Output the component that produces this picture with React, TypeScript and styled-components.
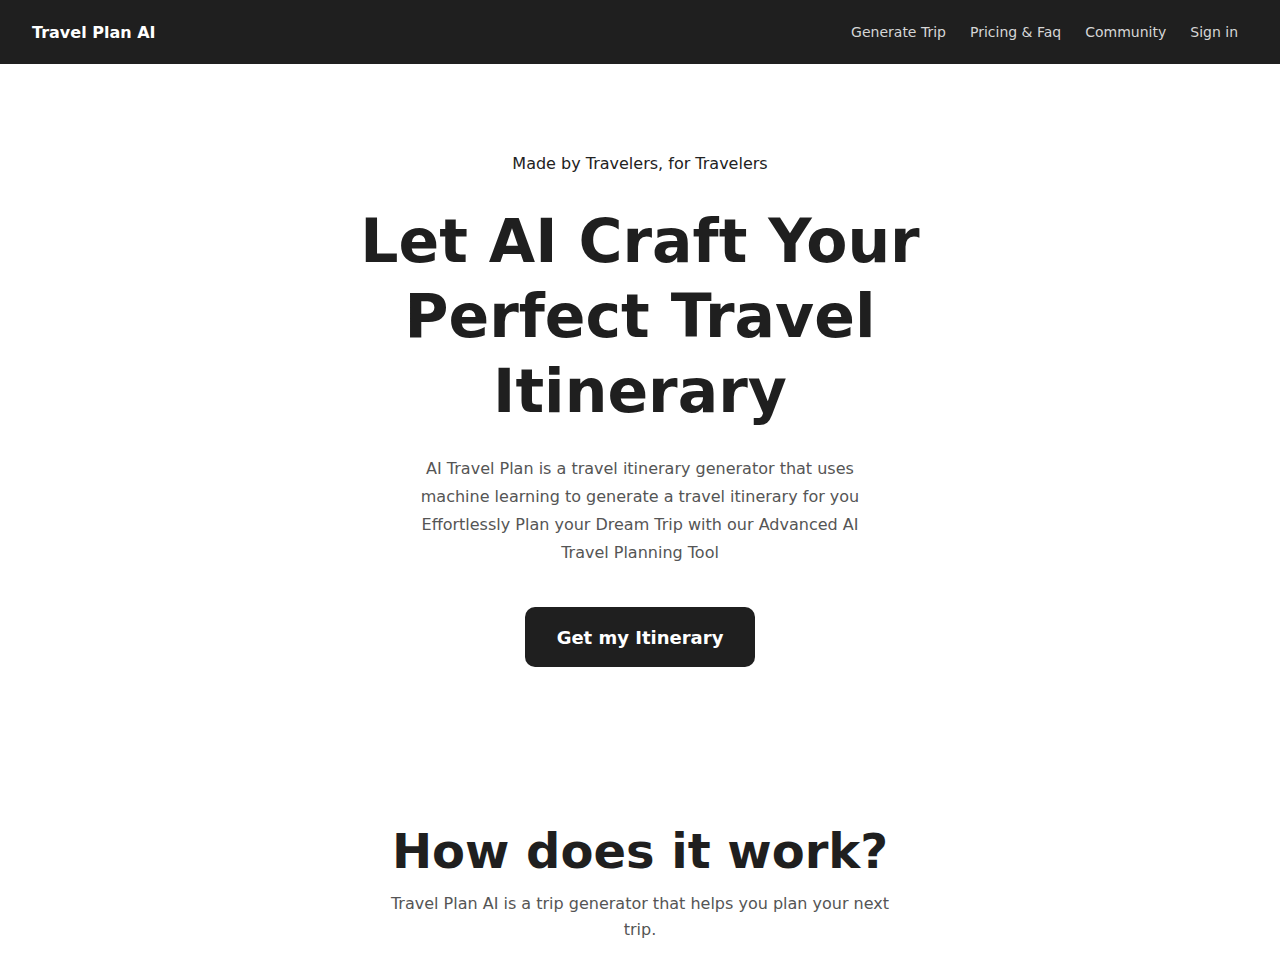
import React from 'react';
import styled, { createGlobalStyle } from 'styled-components';

const GlobalStyle = createGlobalStyle`
  html, body {
    margin: 0;
    padding: 0;
    background: #ffffff;
    font-family: "DejaVu Sans", "Noto Sans", sans-serif;
    color: #1f1f1f;
  }
  * { box-sizing: border-box; }
`;

const NavBar = styled.header`
  height: 64px;
  background: #1f1f1f;
  display: flex;
  align-items: center;
  justify-content: space-between;
  padding: 0 42px 0 32px;
`;

const Logo = styled.a`
  color: #ffffff;
  font-weight: 700;
  font-size: 16px;
  text-decoration: none;
`;

const NavLinks = styled.nav`
  display: flex;
  gap: 24px;
`;

const NavLink = styled.a`
  color: #d6d6d6;
  font-size: 14px;
  text-decoration: none;
`;

const Hero = styled.section`
  display: flex;
  flex-direction: column;
  align-items: center;
  text-align: center;
  padding-top: 90px;
`;

const Tagline = styled.p`
  margin: 0;
  font-size: 16px;
  line-height: 20px;
  color: #222;
`;

const Title = styled.h1`
  margin: 30px 0 0;
  max-width: 600px;
  font-size: 60px;
  line-height: 75px;
  font-weight: 700;
  color: #1f1f1f;
`;

const Lead = styled.p`
  margin: 26px 0 0;
  max-width: 450px;
  font-size: 16px;
  line-height: 28px;
  color: #555;
`;

const PrimaryButton = styled.button`
  margin-top: 40px;
  width: 230px;
  height: 60px;
  border: none;
  border-radius: 10px;
  background: #1f1f1f;
  color: #fff;
  font-family: inherit;
  font-size: 18px;
  font-weight: 700;
  cursor: pointer;
`;

const HowSection = styled.section`
  display: flex;
  flex-direction: column;
  align-items: center;
  text-align: center;
  padding-top: 154px;
`;

const SectionTitle = styled.h2`
  margin: 0;
  font-size: 48px;
  line-height: 60px;
  font-weight: 700;
`;

const SectionText = styled.p`
  margin: 10px 0 0;
  max-width: 510px;
  font-size: 16px;
  line-height: 26px;
  color: #555;
`;

export default function App() {
  return (
    <>
      <GlobalStyle />
      <NavBar>
        <Logo href="#">Travel Plan AI</Logo>
        <NavLinks>
          <NavLink href="#">Generate Trip</NavLink>
          <NavLink href="#">Pricing &amp; Faq</NavLink>
          <NavLink href="#">Community</NavLink>
          <NavLink href="#">Sign in</NavLink>
        </NavLinks>
      </NavBar>
      <Hero>
        <Tagline>Made by Travelers, for Travelers</Tagline>
        <Title>Let AI Craft Your Perfect Travel Itinerary</Title>
        <Lead>
          AI Travel Plan is a travel itinerary generator that uses machine learning to
          generate a travel itinerary for you Effortlessly Plan your Dream Trip with our
          Advanced AI Travel Planning Tool
        </Lead>
        <PrimaryButton>Get my Itinerary</PrimaryButton>
      </Hero>
      <HowSection>
        <SectionTitle>How does it work?</SectionTitle>
        <SectionText>
          Travel Plan AI is a trip generator that helps you plan your next trip.
        </SectionText>
      </HowSection>
    </>
  );
}
